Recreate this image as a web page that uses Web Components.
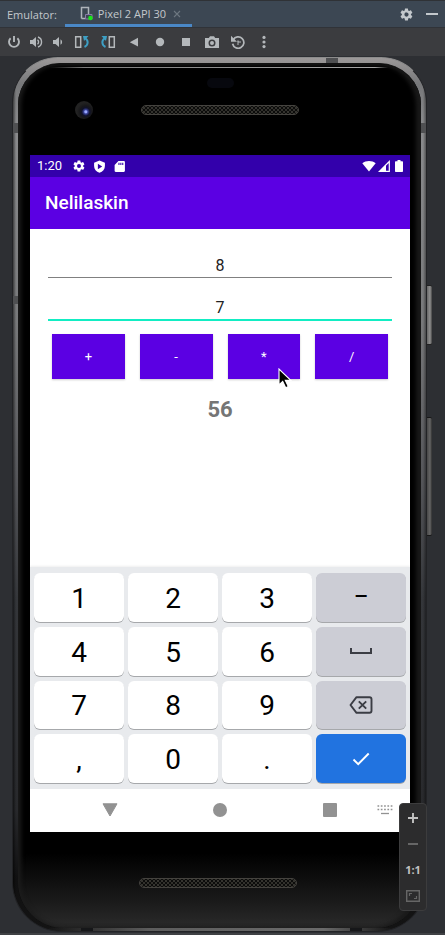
<!DOCTYPE html>
<html lang="fi">
<head>
<meta charset="utf-8">
<meta name="viewport" content="width=device-width, initial-scale=1">
<title>Emulator</title>
<style>
html, body { margin: 0; height: 100%; background: #2d2f33; }
</style>
</head>
<body>
<emulator-window></emulator-window>
<script>
const ICONS = {
  phone: ['0 0 14 15', '<path d="M1.5 12.5v-11h7v7M1.5 12.5h4" fill="none" stroke="#aeb4ba" stroke-width="1.5"/><path d="M5.500 8.500h6.500v4.500h-6.500z" fill="none" stroke="#8a7ba8"/><circle cx="10.500" cy="12" r="2.300" fill="#19e619"/>'],
  close: ['0 0 8 8', '<path d="M1 1l6 6M7 1l-6 6" stroke="#6d7780" stroke-width="1.1"/>'],
  gear: ['0 0 24 24', '<path fill="currentColor" fill-rule="evenodd" d="M19.100 12.900a7.400 7.400 0 0 0 0-1.900l2-1.600c.2-.1.3-.4.1-.6l-1.900-3.300c-.1-.2-.4-.3-.6-.2l-2.400 1c-.5-.4-1-.7-1.600-.9l-.4-2.600c0-.2-.2-.4-.5-.4h-3.800c-.3 0-.5.2-.5.4l-.4 2.600c-.6.200-1.100.500-1.600.900l-2.400-1c-.2-.1-.5 0-.6.2l-1.900 3.300c-.1.200-.1.500.1.600l2 1.600a7.400 7.400 0 0 0 0 1.900l-2 1.600c-.2.100-.2.400-.1.600l1.900 3.300c.1.200.4.300.6.200l2.400-1c.5.400 1 .7 1.600.9l.4 2.600c0 .2.200.4.500.4h3.800c.3 0 .5-.2.500-.4l.4-2.600c.6-.2 1.100-.5 1.600-.9l2.400 1c.2.100.5 0 .6-.2l1.900-3.300c.1-.2.1-.5-.1-.6zM12 15.400a3.400 3.400 0 1 1 0-6.800 3.400 3.400 0 0 1 0 6.800z"/>'],
  minimise: ['0 0 12 12', '<path d="M0 6h12" stroke="currentColor" stroke-width="2"/>'],
  power: ['0 0 14 14', '<path d="M7 1v6M3.600 3.200a5 5 0 1 0 6.800 0" fill="none" stroke="currentColor" stroke-width="1.900"/>'],
  volup: ['0 0 14 14', '<path d="M1 5h2.500L7 2v10L3.500 9H1z" fill="currentColor"/><path d="M8.500 4.700a3 3 0 0 1 0 4.600M9 2a5.300 5.300 0 0 1 0 10" fill="none" stroke="currentColor" stroke-width="1.400"/>'],
  voldown: ['0 0 14 14', '<path d="M2 5h2.500L8 2v10L4.500 9H2z" fill="currentColor"/><path d="M9.500 4.200a3.200 3.200 0 0 1 0 5.600z" fill="currentColor"/>'],
  rotl: ['0 0 16 14', '<path d="M1.700 1.800h5v10.500h-5z" fill="none" stroke="currentColor" stroke-width="1.500"/><path d="M10.500 12c4-2 4-6.500 1-8.500" fill="none" stroke="#3d9fc4" stroke-width="2"/><path d="M9 1h5.500l-4.500 5z" fill="#3d9fc4"/>'],
  rotr: ['0 0 16 14', '<path d="M9.300 1.800h5v10.500h-5z" fill="none" stroke="currentColor" stroke-width="1.500"/><path d="M5.500 12c-4-2-4-6.500-1-8.500" fill="none" stroke="#3d9fc4" stroke-width="2"/><path d="M7 1H1.500L6 6z" fill="#3d9fc4"/>'],
  back: ['0 0 14 14', '<path d="M11 2.800v8.800L2.800 7.200z" fill="currentColor"/>'],
  home: ['0 0 14 14', '<circle cx="7" cy="7" r="4.200" fill="currentColor"/>'],
  square: ['0 0 14 14', '<path d="M3 3h8v8H3z" fill="currentColor"/>'],
  camera: ['0 0 14 14', '<path fill="currentColor" fill-rule="evenodd" d="M5 1.200h4l1.200 1.800H14v10H0V3h3.800zM7 4.500a3.500 3.500 0 1 0 0 7 3.500 3.500 0 0 0 0-7zM7 6a2 2 0 1 1 0 4 2 2 0 0 1 0-4z"/>'],
  history: ['0 0 14 14', '<path d="M2.200 4.800a5.700 5.700 0 1 1-.6 4" fill="none" stroke="currentColor" stroke-width="1.700"/><path d="M0 .8v6h6z" fill="currentColor"/><path d="M7 10V7h3M6 6.200h2" fill="none" stroke="currentColor"/>'],
  more: ['0 0 14 14', '<g fill="currentColor"><circle cx="7" cy="2.400" r="1.600"/><circle cx="7" cy="7" r="1.600"/><circle cx="7" cy="11.600" r="1.600"/></g>'],
  shield: ['0 0 24 24', '<path fill="currentColor" fill-rule="evenodd" d="M12 1l10 4v6c0 6-4 10.500-10 12.500C6 21.500 2 17 2 11V5zM9 7v10l8-5z"/>'],
  sd: ['0 0 24 24', '<path fill="currentColor" fill-rule="evenodd" d="M20 2H10L3 9v11c0 1.500.800 2 2 2h15c1 0 2-.7 2-2V4c0-1-1-2-2-2zM10 5h2v4h-2zm3.500 0h2v4h-2zM17 5h2v4h-2z"/>'],
  wifi: ['0 0 14 12', '<path d="M7 11.500L.3 3.300C4 .1 10 .1 13.700 3.300z" fill="currentColor"/>'],
  signal: ['0 0 12 12', '<path d="M11.300 1.500V11.300H1.500z" fill="none" stroke="currentColor" stroke-width="1.200"/><path d="M8 4.500V12H.5z" fill="currentColor"/>'],
  battery: ['0 0 8 12', '<path d="M2.500 0h3v1.200H7c.6 0 1 .4 1 1V11c0 .6-.4 1-1 1H1c-.6 0-1-.4-1-1V2.200c0-.6.4-1 1-1h1.500z" fill="currentColor"/>'],
  space: ['0 0 22 8', '<path d="M1 1v5h20V1" fill="none" stroke="currentColor" stroke-width="2"/>'],
  erase: ['0 0 24 18', '<path d="M7.500 1.200h13c1.300 0 2 .7 2 2v11.600c0 1.300-.7 2-2 2h-13L1.500 9z" fill="none" stroke="currentColor" stroke-width="1.900" stroke-linejoin="round"/><path d="M9.800 5.300l7.400 7.400M17.200 5.300l-7.400 7.400" stroke="currentColor" stroke-width="1.900"/>'],
  check: ['0 0 18 14', '<path d="M1.500 7.500l4.700 4.700L16.700 1.500" fill="none" stroke="currentColor" stroke-width="1.900"/>'],
  navback: ['0 0 16 14', '<path d="M1 .800h14L8 13z" fill="currentColor" stroke="currentColor" stroke-linejoin="round"/>'],
  navhome: ['0 0 14 14', '<circle cx="7" cy="7" r="7" fill="currentColor"/>'],
  navrecent: ['0 0 14 14', '<rect width="14" height="14" rx="1" fill="currentColor"/>'],
  navkeys: ['0 0 16 10', '<g stroke="currentColor" stroke-width="1.700" stroke-dasharray="1.700 1.600"><path d="M.5 1h15.200M.5 4.500h15.200"/></g><path d="M4 8.500h8" stroke="currentColor" stroke-width="1.300"/>'],
  plus: ['0 0 12 12', '<path d="M6 1v10M1 6h10" stroke="currentColor" stroke-width="1.900"/>'],
  minus: ['0 0 12 12', '<path d="M1 6h10" stroke="currentColor" stroke-width="2"/>'],
  fit: ['0 0 14 12', '<path d="M.7.7h12.600v10.600H.7z" fill="none" stroke="currentColor" stroke-width="1.400"/><path d="M3.500 6V3.500H6M10.500 6v2.500H8" fill="none" stroke="currentColor" stroke-width="1.200"/>'],
  pointer: ['0 0 14 21', '<path d="M1 1v16l3.700-3.600 3 6.400 2.600-1.200-3-6.200H12.800z" fill="#000" stroke="#fff" stroke-width="1.100"/>']
};

/* Base class: clones a template into an open shadow root. */
class Part extends HTMLElement {
  constructor() {
    super();
    const t = document.createElement('template');
    t.innerHTML = '<style>*{box-sizing:border-box}button{font:inherit;color:inherit;border:0;padding:0;margin:0;background:none;display:grid;place-items:center}</style>' + this.constructor.markup;
    this.attachShadow({ mode: 'open' }).append(t.content.cloneNode(true));
  }
}

customElements.define('ui-icon', class extends HTMLElement {
  connectedCallback() {
    if (this.shadowRoot) return;
    const [box, art] = ICONS[this.getAttribute('name')];
    const [, , w, h] = box.split(' ').map(Number);
    const width = Number(this.getAttribute('size')) || w;
    this.attachShadow({ mode: 'open' }).innerHTML =
      `<style>:host{display:block;flex:none}svg{display:block}</style>
       <svg viewBox="${box}" width="${width}" height="${Math.round(width * h / w)}" aria-hidden="true">${art}</svg>`;
  }
});

customElements.define('tab-header', class extends Part {
  static markup = `<style>
    :host{display:flex;height:28px;background:#3c4753;border-top:1px solid #2f3236;border-bottom:1px solid #303338;color:#c3c8cc;font:11px/24px "Open Sans","Noto Sans",sans-serif;padding:0 7px;box-sizing:border-box}
    .tab{display:flex;align-items:center;gap:4px;margin:0 0 0 8px;padding:2px 8px 0 15px;border-bottom:3px solid #4a88c7}
    .title{padding-top:2px}
    .spacer{flex:1}
    button{width:26px}
    .close{width:14px}
    .last{width:26px;margin-right:-7px}
    </style>
    <span class="title">Emulator:</span>
    <div class="tab"><ui-icon name="phone"></ui-icon><span>Pixel 2 API 30</span><button class="close" aria-label="Close tab"><ui-icon name="close"></ui-icon></button></div>
    <span class="spacer"></span>
    <button aria-label="Settings"><ui-icon name="gear" size="15"></ui-icon></button>
    <button class="last" aria-label="Hide"><ui-icon name="minimise"></ui-icon></button>`;
});

customElements.define('tool-bar', class extends Part {
  static markup = `<style>
    :host{display:flex;height:28px;padding:0 3px;background:#3b3c3f;color:#b4b8bb}
    button{width:26px}
    button:nth-of-type(-n+3){width:22px}
    </style>
    <button aria-label="Power"><ui-icon name="power"></ui-icon></button>
    <button aria-label="Volume up"><ui-icon name="volup"></ui-icon></button>
    <button aria-label="Volume down"><ui-icon name="voldown"></ui-icon></button>
    <button aria-label="Rotate left"><ui-icon name="rotl"></ui-icon></button>
    <button aria-label="Rotate right"><ui-icon name="rotr"></ui-icon></button>
    <button aria-label="Back"><ui-icon name="back"></ui-icon></button>
    <button aria-label="Home"><ui-icon name="home"></ui-icon></button>
    <button aria-label="Overview"><ui-icon name="square"></ui-icon></button>
    <button aria-label="Take screenshot"><ui-icon name="camera"></ui-icon></button>
    <button aria-label="Snapshots"><ui-icon name="history"></ui-icon></button>
    <button aria-label="More"><ui-icon name="more"></ui-icon></button>`;
});

customElements.define('speaker-grille', class extends Part {
  static markup = `<style>
    :host{display:block;box-sizing:border-box;width:158px;height:10px;border:1px solid #45433f;border-radius:5px;
      background:radial-gradient(circle,#35342f 1px,transparent 1px) 0 0/4px 4px,radial-gradient(circle,#32312c 1px,transparent 1px) 2px 2px/4px 4px,#0c0c0b}
    </style>`;
});

customElements.define('phone-frame', class extends Part {
  static markup = `<style>
    :host{position:relative;display:flex;flex:1}
    .shell{flex:1;display:flex;padding:5px 5px 3px;border:1px solid #222326;border-top-color:#8c8c8c;border-radius:46px 46px 50px 50px;
      background:
        linear-gradient(#4f5052,#4f5052) 78% 0/12px 5px no-repeat,
        linear-gradient(#4f5052,#4f5052) 0 65px/5px 10px no-repeat,
        linear-gradient(#4f5052,#4f5052) 100% 65px/5px 10px no-repeat,
        linear-gradient(#4f5052,#4f5052) 0 238px/5px 8px no-repeat,
        linear-gradient(#161719,#161719) 17% 100%/12px 3px no-repeat,
        linear-gradient(#161719,#161719) 84% 100%/12px 3px no-repeat,
        linear-gradient(90deg,transparent,#5d5d5d 30%,#6a6a6a 80%,transparent) 50% 100%/84% 3px no-repeat,
        linear-gradient(90deg,#0008 0,transparent 3px,transparent calc(100% - 3px),#0006 100%),
        linear-gradient(#9c9999 0,#77787a 3%,#8a8b8d 8%,#78797b 30%,#55565a 48%,#34363a 62%,#28292c 86%,#101011 94%,#141414)}
    .body{flex:1;display:flex;flex-direction:column;padding:0 11px 0 12px;border-radius:42px 42px 46px 46px;
      border-top:1px solid #111;
      background:linear-gradient(90deg,transparent,#8a8a8a 10%,#b8b8b8 96%,transparent) 50% 3px/84% 1px no-repeat,
        linear-gradient(transparent calc(100% - 75px),#1b1b1b calc(100% - 25px),#2b2b2b),#000;
      box-shadow:inset 3px 0 4px #1c1c1c,inset -5px 0 4px #1a1a1a}
    .top{height:91px;display:grid;grid-template:37px 17px/1fr 158px 1fr;align-items:center}
    .sensor{grid-area:1/2;justify-self:center;width:27px;height:10px;border-radius:5px;background:#07080e}
    .camera{grid-area:2/1;margin-left:45px;width:18px;height:18px;border-radius:50%;background:radial-gradient(circle at 60% 60%,#9aa8ff 1px,#3b449c 2px,#10122a 4px,#17171a 6px,#222 9px)}
    speaker-grille{grid-area:2/2}
    .bottom{height:96px;display:flex;justify-content:center;padding:46px 4px 0 0}
    .screen{flex:1;display:flex;flex-direction:column;background:#fff}
    .key{position:absolute;left:100%;width:5px;border-radius:0 2px 2px 0;background:linear-gradient(90deg,#666,#909090 60%,#444);border:solid #222;border-width:1px 0}
    .power{top:228px;height:60px}
    .volume{top:360px;height:119px;filter:brightness(.7)}
    </style>
    <div class="shell"><div class="body">
      <div class="top"><div class="sensor"></div><div class="camera"></div><speaker-grille></speaker-grille></div>
      <div class="screen"><slot></slot></div>
      <div class="bottom"><speaker-grille></speaker-grille></div>
    </div></div>
    <div class="key power"></div><div class="key volume"></div>`;
});

customElements.define('status-bar', class extends Part {
  static markup = `<style>
    :host{display:flex;align-items:center;gap:7px;height:22px;padding:0 7px;background:#3300ab;color:#fff;font:13px/22px Roboto,sans-serif}
    time{margin-right:3px}
    .right{display:flex;gap:2px;margin-left:auto}
    .right ui-icon:last-child{margin-left:3px}
    </style>
    <time>1:20</time><ui-icon name="gear" size="14"></ui-icon><ui-icon name="shield" size="13"></ui-icon><ui-icon name="sd" size="13"></ui-icon>
    <span class="right"><ui-icon name="wifi"></ui-icon><ui-icon name="signal"></ui-icon><ui-icon name="battery"></ui-icon></span>`;
});

customElements.define('app-bar', class extends Part {
  static markup = `<style>
    :host{display:block;background:#5b00e3;color:#fff;padding:0 15px}
    h1{margin:0;font:500 19px/52px Roboto,sans-serif}
    </style><h1><slot></slot></h1>`;
});

customElements.define('number-field', class extends Part {
  static markup = `<style>
    :host{display:block}
    input{display:block;width:100%;height:42px;padding:17px 0 0;border:0;border-bottom:1px solid #808080;outline:0;background:none;text-align:center;font:16px/20px Roboto,sans-serif;color:#222;border-radius:0}
    :host([active]) input{height:43px;border-bottom:2px solid #12edc3}
    </style><input type="text" inputmode="decimal">`;
  connectedCallback() {
    const input = this.shadowRoot.querySelector('input');
    input.value = this.getAttribute('value');
    input.setAttribute('aria-label', this.getAttribute('label'));
  }
});

customElements.define('calc-form', class extends Part {
  static markup = `<style>
    :host{display:flex;flex-direction:column;flex:1;padding:7px 18px 0;background:#fff}
    .ops{display:grid;grid-template-columns:repeat(4,1fr);gap:15px;padding:13px 4px 0}
    button{position:relative;height:45px;background:#5b00e3;color:#fff;font:13px/20px Roboto,sans-serif;box-shadow:0 1px 2px #0003}
    .pointer{position:absolute;left:50px;top:34px;z-index:1}
    output{display:block;margin-top:18px;text-align:center;font:700 22px/26px Roboto,sans-serif;color:#757575}
    </style>
    <number-field value="8" label="Luku 1"></number-field>
    <number-field value="7" label="Luku 2" active></number-field>
    <div class="ops"><button>+</button><button>-</button><button>*<ui-icon class="pointer" name="pointer"></ui-icon></button><button>/</button></div>
    <output>56</output>`;
});

customElements.define('number-keyboard', class extends Part {
  static markup = `<style>
    :host{display:grid;grid-template-columns:repeat(4,1fr);grid-template-rows:repeat(4,1fr);gap:5px 4px;height:222px;box-sizing:border-box;padding:6px 4px;background:#e8eaed;font:28px/32px Roboto,sans-serif;color:#000;box-shadow:0 -1px 2px #0001}
    button{padding-top:3px;background:#fff;border-radius:6px;box-shadow:0 1px 0 #a6a8ab}
    .fn{padding-top:0;background:#cccdd5;color:#3b3d44}
    .dash{color:#000;font-size:22px;font-weight:500}
    .ok{padding-top:0;background:#2173e0;color:#fff}
    </style>
    <button>1</button><button>2</button><button>3</button><button class="fn dash">–</button>
    <button>4</button><button>5</button><button>6</button><button class="fn" aria-label="Space"><ui-icon name="space"></ui-icon></button>
    <button>7</button><button>8</button><button>9</button><button class="fn" aria-label="Delete"><ui-icon name="erase"></ui-icon></button>
    <button>,</button><button>0</button><button>.</button><button class="ok" aria-label="Done"><ui-icon name="check"></ui-icon></button>`;
});

customElements.define('nav-bar', class extends Part {
  static markup = `<style>
    :host{display:grid;grid-template:41px/25px 1fr 1fr 1fr 25px;padding-bottom:2px;background:#fff;color:#929292}
    button{grid-row:1}
    .back{grid-column:2}
    .home{grid-column:3}
    .recent{grid-column:4}
    .keys{grid-column:4/6;justify-self:end;margin-right:17px}
    </style>
    <button class="back" aria-label="Back"><ui-icon name="navback"></ui-icon></button>
    <button class="home" aria-label="Home"><ui-icon name="navhome"></ui-icon></button>
    <button class="recent" aria-label="Recent"><ui-icon name="navrecent"></ui-icon></button>
    <button class="keys" aria-label="Keyboard"><ui-icon name="navkeys"></ui-icon></button>`;
});

customElements.define('zoom-panel', class extends Part {
  static markup = `<style>
    :host{display:grid;grid-auto-rows:26px;width:28px;padding:1px;background:#2c2c2d;border:1px solid #3c3c3d;border-radius:4px;color:#c2c2c2;font:700 11px/26px "Open Sans",sans-serif;box-sizing:border-box}
    .off{color:#666}
    </style>
    <button aria-label="Zoom in"><ui-icon name="plus"></ui-icon></button>
    <button class="off" aria-label="Zoom out"><ui-icon name="minus"></ui-icon></button>
    <button>1:1</button>
    <button class="off" aria-label="Fit"><ui-icon name="fit"></ui-icon></button>`;
});

customElements.define('emulator-window', class extends Part {
  static markup = `<style>
    :host{display:flex;flex-direction:column;min-height:100%;background:#2d2f33}
    main{position:relative;flex:1;display:flex;padding:1px 18px 1px 12px;border-bottom:2px solid #3f4144}
    zoom-panel{position:absolute;right:18px;bottom:22px}
    </style>
    <tab-header></tab-header>
    <tool-bar></tool-bar>
    <main>
      <phone-frame>
        <status-bar></status-bar>
        <app-bar>Nelilaskin</app-bar>
        <calc-form></calc-form>
        <number-keyboard></number-keyboard>
        <nav-bar></nav-bar>
      </phone-frame>
      <zoom-panel></zoom-panel>
    </main>`;
});
</script>
</body>
</html>
